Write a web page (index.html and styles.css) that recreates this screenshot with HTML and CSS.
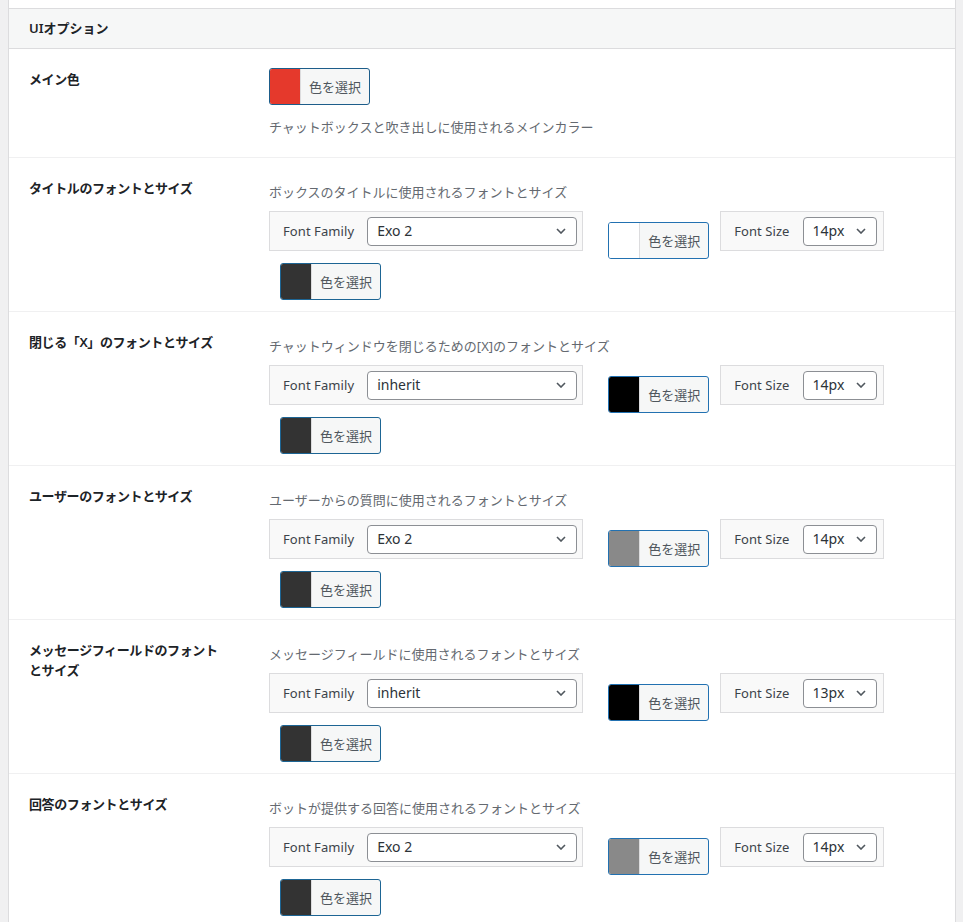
FILE: index.html
```html
<!DOCTYPE html>
<html lang="ja">
<head>
  <meta charset="UTF-8">
  <meta name="viewport" content="width=device-width, initial-scale=1.0">
  <title>UIオプション</title>
  <link rel="stylesheet" href="styles.css">
</head>
<body>
  <div class="panel">
    <div class="panel-head">UIオプション</div>

    <div class="row">
      <div class="label">メイン色</div>
      <div class="field first">
        <button class="color-btn strong"><span class="swatch sw-red"></span><span class="pick">色を選択</span></button>
        <p class="desc desc-below">チャットボックスと吹き出しに使用されるメインカラー</p>
      </div>
    </div>

    <div class="row">
      <div class="label">タイトルのフォントとサイズ</div>
      <div class="field">
        <p class="desc">ボックスのタイトルに使用されるフォントとサイズ</p>
        <div class="controls">
          <div class="group">
            <span class="group-label">Font Family</span>
            <div class="select family"><span>Exo 2</span><svg width="10" height="6" viewBox="0 0 10 6"><path d="M1 1l4 4 4-4" fill="none" stroke="#50575e" stroke-width="1.6"/></svg></div>
          </div>
          <button class="color-btn mid"><span class="swatch sw-white"></span><span class="pick">色を選択</span></button>
          <div class="group size-group">
            <span class="group-label">Font Size</span>
            <div class="select size"><span>14px</span><svg width="10" height="6" viewBox="0 0 10 6"><path d="M1 1l4 4 4-4" fill="none" stroke="#50575e" stroke-width="1.6"/></svg></div>
          </div>
        </div>
        <button class="color-btn extra"><span class="swatch sw-dark"></span><span class="pick">色を選択</span></button>
      </div>
    </div>

    <div class="row">
      <div class="label">閉じる「X」のフォントとサイズ</div>
      <div class="field">
        <p class="desc">チャットウィンドウを閉じるための[X]のフォントとサイズ</p>
        <div class="controls">
          <div class="group">
            <span class="group-label">Font Family</span>
            <div class="select family"><span>inherit</span><svg width="10" height="6" viewBox="0 0 10 6"><path d="M1 1l4 4 4-4" fill="none" stroke="#50575e" stroke-width="1.6"/></svg></div>
          </div>
          <button class="color-btn mid"><span class="swatch sw-black"></span><span class="pick">色を選択</span></button>
          <div class="group size-group">
            <span class="group-label">Font Size</span>
            <div class="select size"><span>14px</span><svg width="10" height="6" viewBox="0 0 10 6"><path d="M1 1l4 4 4-4" fill="none" stroke="#50575e" stroke-width="1.6"/></svg></div>
          </div>
        </div>
        <button class="color-btn extra"><span class="swatch sw-dark"></span><span class="pick">色を選択</span></button>
      </div>
    </div>

    <div class="row">
      <div class="label">ユーザーのフォントとサイズ</div>
      <div class="field">
        <p class="desc">ユーザーからの質問に使用されるフォントとサイズ</p>
        <div class="controls">
          <div class="group">
            <span class="group-label">Font Family</span>
            <div class="select family"><span>Exo 2</span><svg width="10" height="6" viewBox="0 0 10 6"><path d="M1 1l4 4 4-4" fill="none" stroke="#50575e" stroke-width="1.6"/></svg></div>
          </div>
          <button class="color-btn mid"><span class="swatch sw-gray"></span><span class="pick">色を選択</span></button>
          <div class="group size-group">
            <span class="group-label">Font Size</span>
            <div class="select size"><span>14px</span><svg width="10" height="6" viewBox="0 0 10 6"><path d="M1 1l4 4 4-4" fill="none" stroke="#50575e" stroke-width="1.6"/></svg></div>
          </div>
        </div>
        <button class="color-btn extra"><span class="swatch sw-dark"></span><span class="pick">色を選択</span></button>
      </div>
    </div>

    <div class="row">
      <div class="label">メッセージフィールドのフォントとサイズ</div>
      <div class="field">
        <p class="desc">メッセージフィールドに使用されるフォントとサイズ</p>
        <div class="controls">
          <div class="group">
            <span class="group-label">Font Family</span>
            <div class="select family"><span>inherit</span><svg width="10" height="6" viewBox="0 0 10 6"><path d="M1 1l4 4 4-4" fill="none" stroke="#50575e" stroke-width="1.6"/></svg></div>
          </div>
          <button class="color-btn mid"><span class="swatch sw-black"></span><span class="pick">色を選択</span></button>
          <div class="group size-group">
            <span class="group-label">Font Size</span>
            <div class="select size"><span>13px</span><svg width="10" height="6" viewBox="0 0 10 6"><path d="M1 1l4 4 4-4" fill="none" stroke="#50575e" stroke-width="1.6"/></svg></div>
          </div>
        </div>
        <button class="color-btn extra"><span class="swatch sw-dark"></span><span class="pick">色を選択</span></button>
      </div>
    </div>

    <div class="row">
      <div class="label">回答のフォントとサイズ</div>
      <div class="field">
        <p class="desc">ボットが提供する回答に使用されるフォントとサイズ</p>
        <div class="controls">
          <div class="group">
            <span class="group-label">Font Family</span>
            <div class="select family"><span>Exo 2</span><svg width="10" height="6" viewBox="0 0 10 6"><path d="M1 1l4 4 4-4" fill="none" stroke="#50575e" stroke-width="1.6"/></svg></div>
          </div>
          <button class="color-btn mid"><span class="swatch sw-gray"></span><span class="pick">色を選択</span></button>
          <div class="group size-group">
            <span class="group-label">Font Size</span>
            <div class="select size"><span>14px</span><svg width="10" height="6" viewBox="0 0 10 6"><path d="M1 1l4 4 4-4" fill="none" stroke="#50575e" stroke-width="1.6"/></svg></div>
          </div>
        </div>
        <button class="color-btn extra"><span class="swatch sw-dark"></span><span class="pick">色を選択</span></button>
      </div>
    </div>
  </div>
</body>
</html>
```

FILE: styles.css
```css
* {
  box-sizing: border-box;
}

body {
  margin: 0;
  background-color: #f0f0f1;
  color: #1d2327;
  font-family: "Noto Sans", "Noto Sans CJK JP", sans-serif;
  font-size: 13px;
  line-height: 20px;
  height: 922px;
  overflow: hidden;
}

.panel {
  margin: 0 7px 0 8px;
  padding-top: 8px;
  background-color: #fff;
  border-left: 1px solid #dcdcde;
  border-right: 1px solid #dcdcde;
}

.panel-head {
  height: 41px;
  padding: 9px 20px 0;
  background-color: #f6f7f7;
  border-top: 1px solid #dcdcde;
  border-bottom: 1px solid #dcdcde;
  font-weight: 600;
}

.row {
  display: flex;
  border-bottom: 1px solid #f0f0f1;
  padding-left: 20px;
}

.label {
  width: 200px;
  margin-right: 40px;
  padding-top: 20px;
  font-weight: 600;
  letter-spacing: -0.4px;
  flex-shrink: 0;
}

.field {
  flex: 1;
  padding: 24px 0 11px;
}

.field.first {
  padding: 19px 0 20px;
}

.desc {
  margin: 0;
  color: #646970;
}

.desc-below {
  margin-top: 12px;
}

.controls {
  display: flex;
  align-items: flex-start;
  margin-top: 9px;
}

.group {
  display: flex;
  align-items: center;
  height: 40px;
  padding: 0 5px 0 13px;
  background-color: #f9f9f9;
  border: 1px solid #dcdcde;
  color: #3c434a;
}

.size-group {
  padding-right: 6px;
}

.group-label {
  margin-right: 13px;
  letter-spacing: 0.08px;
}

.select {
  display: flex;
  align-items: center;
  justify-content: space-between;
  height: 29px;
  padding: 0 10px 0 9px;
  background-color: #fff;
  border: 1px solid #8c8f94;
  border-radius: 4px;
  font-size: 14px;
  color: #2c3338;
}

.select.family {
  width: 210px;
}

.select.size {
  width: 74px;
}

.color-btn {
  display: flex;
  height: 37px;
  padding: 0;
  border: 1px solid #2271b1;
  border-radius: 3px;
  background-color: #f6f7f7;
  overflow: hidden;
  font-family: inherit;
  font-size: 13px;
  cursor: pointer;
}

.color-btn.strong {
  border-color: #1d5d8a;
}

.color-btn.mid {
  margin: 11px 11px 0 25px;
}

.color-btn.extra {
  margin: 4px 0 0 11px;
  border-color: #1d6594;
}

.swatch {
  width: 30px;
  height: 100%;
}

.pick {
  display: flex;
  align-items: center;
  padding: 0 8px;
  border-left: 1px solid #dcdcde;
  color: #50575e;
}

.sw-red { background-color: #e5392c; }
.sw-white { background-color: #fff; }
.sw-black { background-color: #000; }
.sw-gray { background-color: #898989; }
.sw-dark { background-color: #333; }
```
